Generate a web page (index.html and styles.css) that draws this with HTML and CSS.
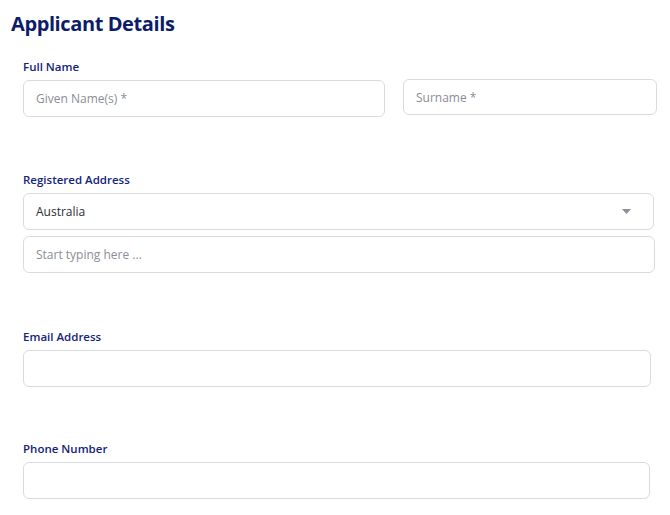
FILE: index.html
```html
<!DOCTYPE html>
<html lang="en">
<head>
<meta charset="utf-8">
<title>Applicant Details</title>
<link rel="stylesheet" href="styles.css">
</head>
<body>
<main class="page">
  <h1 class="title">Applicant Details</h1>
  <form class="form">
    <section class="group">
      <label class="label">Full Name</label>
      <div class="row">
        <div class="field field-given"><span class="placeholder">Given Name(s) *</span></div>
        <div class="field field-surname"><span class="placeholder">Surname *</span></div>
      </div>
    </section>
    <section class="group group-address">
      <label class="label">Registered Address</label>
      <div class="stack">
        <div class="field field-select">
          <span class="value">Australia</span>
          <svg class="caret" width="9" height="5" viewBox="0 0 9 5"><path d="M0 0h9L4.5 5z" fill="#8c9099"/></svg>
        </div>
        <div class="field field-address"><span class="placeholder">Start typing here ...</span></div>
      </div>
    </section>
    <section class="group group-email">
      <label class="label">Email Address</label>
      <div class="field field-email"></div>
    </section>
    <section class="group">
      <label class="label">Phone Number</label>
      <div class="field field-phone"></div>
    </section>
  </form>
</main>
</body>
</html>
```

FILE: styles.css
```css
* { box-sizing: border-box; }
html, body { margin: 0; padding: 0; background: #ffffff; }
body {
  font-family: "Open Sans", "Liberation Sans", sans-serif;
  color: #222;
}
.page {
  padding: 11px 0 0 11px;
}
.title {
  margin: 0;
  font-size: 20px;
  line-height: 26px;
  font-weight: 700;
  color: #0c1c6b;
  letter-spacing: -0.4px;
}
.form {
  display: flex;
  flex-direction: column;
  padding-left: 12px;
  margin-top: 23px;
  gap: 55px;
}
.group {
  display: flex;
  flex-direction: column;
  gap: 6px;
}
.group-address { margin-top: 1px; }
.group-email { margin-top: 2px; }
.label {
  font-size: 11.5px;
  line-height: 14px;
  font-weight: 600;
  color: #14237a;
}
.row {
  display: flex;
  align-items: flex-start;
  gap: 18px;
}
.stack {
  display: flex;
  flex-direction: column;
  gap: 6px;
}
.field {
  display: flex;
  align-items: center;
  height: 37px;
  border: 1px solid #d8dbe0;
  border-radius: 6px;
  padding: 0 12px;
  font-size: 12px;
  background: #fff;
}
.field-given { width: 362px; height: 37px; }
.field-surname { width: 254px; height: 36px; margin-top: -1px; }
.field-select { width: 631px; justify-content: space-between; padding-right: 22px; }
.field-address { width: 632px; }
.field-email { width: 628px; }
.field-phone { width: 627px; }
.placeholder { color: #8a8e96; }
.value { color: #2b2d33; }
.caret { display: block; }
```
